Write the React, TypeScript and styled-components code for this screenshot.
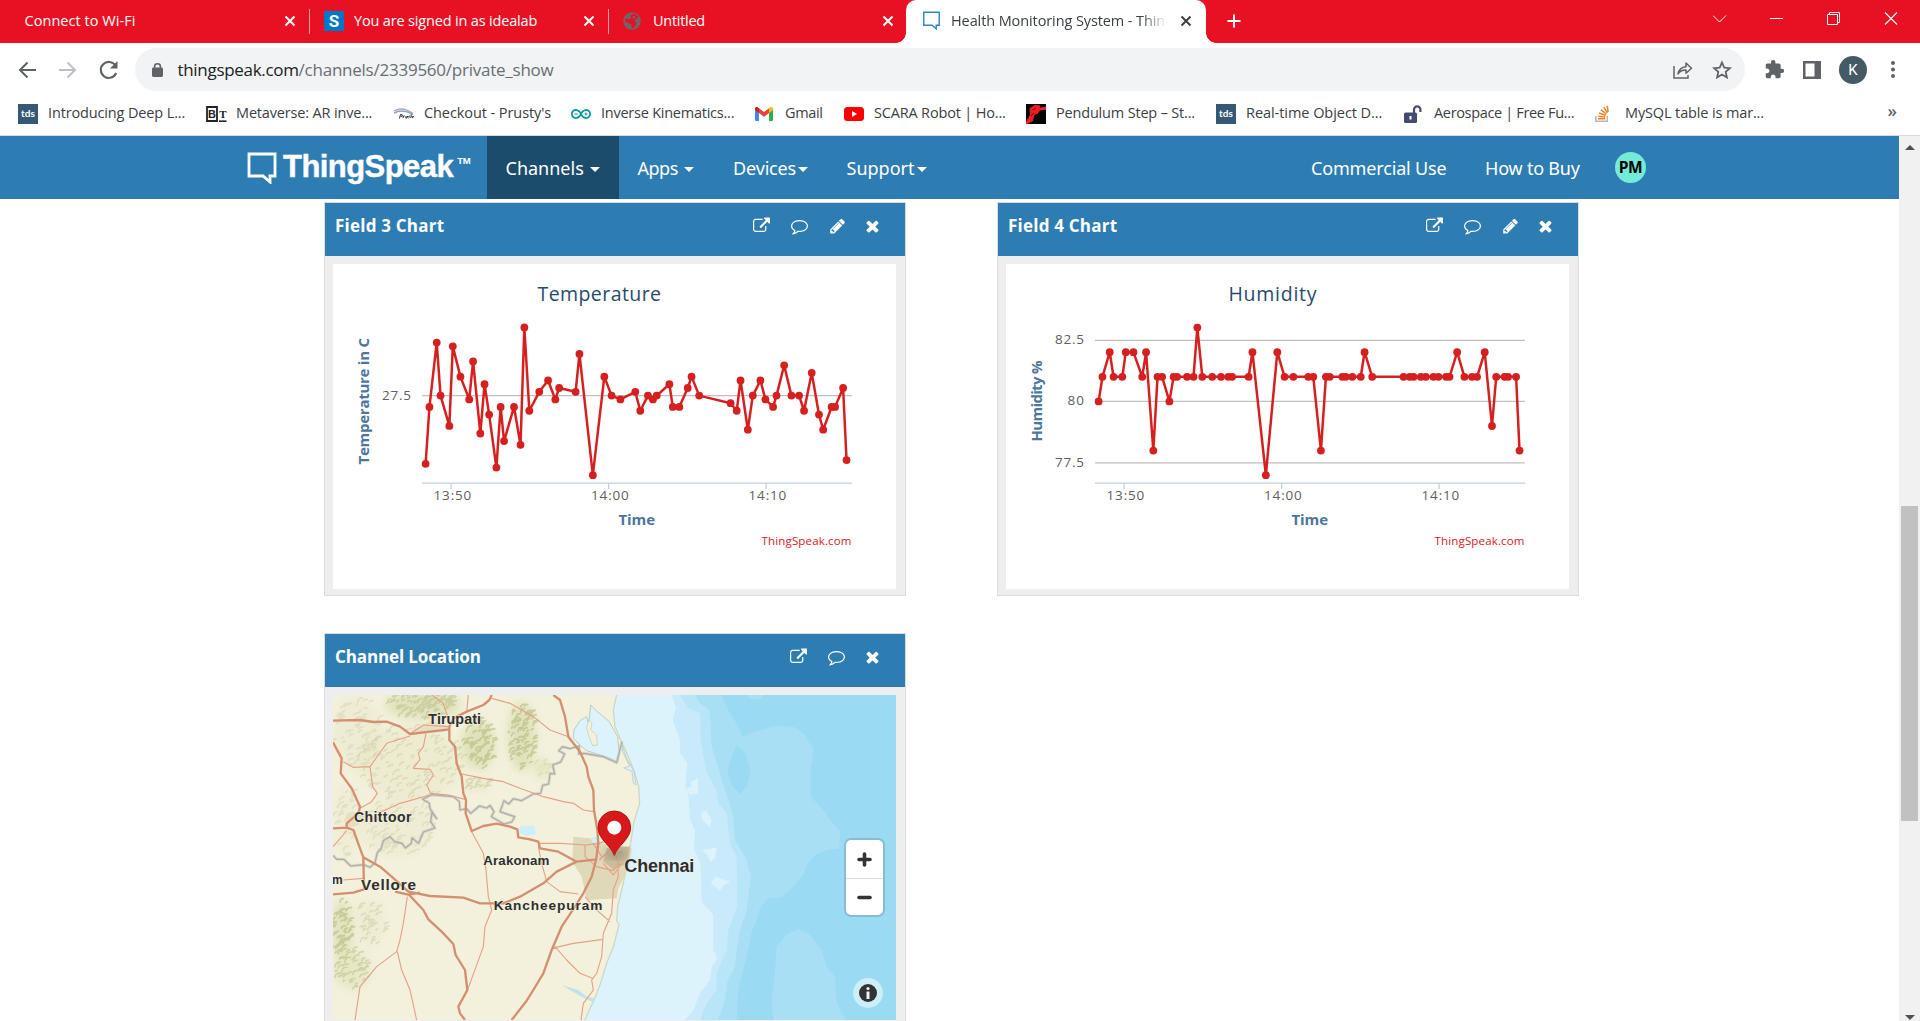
import React from 'react';
import styled, { createGlobalStyle, css } from 'styled-components';
import { SiArduino } from 'react-icons/si';

const UI_FONT = `'Open Sans', 'Noto Sans', sans-serif`;
const SITE_FONT = `'Noto Sans', 'Open Sans', sans-serif`;
const BLUE = '#2e7db2';
const RED = '#e81123';
const SERIES = '#d62020';

const GlobalStyle = createGlobalStyle`
  html, body { margin: 0; padding: 0; background: #fff; overflow: hidden; }
  * { box-sizing: border-box; }
  svg { display: block; flex: none; }
`;

const Window = styled.div`
  display: flex;
  flex-direction: column;
  width: 1920px;
  height: 1021px;
  overflow: hidden;
  background: #fff;
  font-family: ${UI_FONT};
`;

/* ---------- tab strip ---------- */

const TabStrip = styled.div`
  display: flex;
  height: 43px;
  background: ${RED};
  color: #fff;
`;

const Tab = styled.div<{ $width: number; $active?: boolean; $divider?: boolean; $pad?: number; $end?: number }>`
  position: relative;
  display: flex;
  align-items: center;
  width: ${(p) => p.$width}px;
  height: 43px;
  padding: 0 ${(p) => p.$end ?? 13}px 2px ${(p) => p.$pad ?? 14}px;
  ${(p) =>
    p.$divider &&
    css`
      &::after {
        content: '';
        position: absolute;
        right: 0;
        top: 9px;
        width: 1px;
        height: 25px;
        background: #f6a0a7;
      }
    `}
  ${(p) =>
    p.$active &&
    css`
      background: #fff;
      color: #3c4043;
      border-radius: 10px 10px 0 0;
      &::before,
      &::after {
        content: '';
        position: absolute;
        bottom: 0;
        width: 10px;
        height: 10px;
      }
      &::before {
        left: -10px;
        background: radial-gradient(circle at 0 0, transparent 9.5px, #fff 10px);
      }
      &::after {
        right: -10px;
        background: radial-gradient(circle at 100% 0, transparent 9.5px, #fff 10px);
      }
    `}
`;

const TabIcon = styled.span`
  display: flex;
  width: 30px;
  flex: none;
`;

const TabTitle = styled.span<{ $track?: number; $fade?: boolean }>`
  flex: 1;
  min-width: 0;
  overflow: hidden;
  white-space: nowrap;
  font-size: 14.5px;
  line-height: 22px;
  letter-spacing: ${(p) => p.$track ?? 0}px;
  ${(p) =>
    p.$fade &&
    css`
      margin-right: 12px;
      mask-image: linear-gradient(to right, #000 88%, transparent 100%);
    `}
`;

const SiteTile = styled.span`
  display: flex;
  align-items: center;
  justify-content: center;
  width: 20px;
  height: 20px;
  background: #0078c8;
  color: #fff;
  font: 700 17px/20px 'Roboto', sans-serif;
`;

const NewTab = styled.div`
  display: flex;
  align-items: center;
  padding: 0 0 1px 21px;
`;

const WindowButtons = styled.div`
  display: flex;
  margin-left: auto;
  padding: 11px 21px 0 0;
  gap: 42px;
`;

/* ---------- address row ---------- */

const AddressRow = styled.div`
  display: flex;
  align-items: center;
  height: 53px;
  flex: none;
  padding: 0 21px 0 18px;
  color: #5f6368;
`;

const NavButtons = styled.div`
  display: flex;
  align-items: center;
  gap: 21px;
  width: 117px;
`;

const AddressBar = styled.div`
  display: flex;
  align-items: center;
  width: 1610px;
  height: 43px;
  padding: 0 13px 0 17px;
  border-radius: 22px;
  background: #f1f3f4;
`;

const Url = styled.span`
  flex: 1;
  margin-left: 14.5px;
  font-size: 17px;
  line-height: 24px;
  letter-spacing: -0.24px;
  color: #6a6e73;
`;

const Host = styled.span`
  color: #202124;
  letter-spacing: -0.31px;
`;

const BarIcons = styled.div`
  display: flex;
  align-items: center;
  gap: 19px;
`;

const ToolIcons = styled.div`
  display: flex;
  align-items: center;
  margin-left: auto;
  gap: 18px;
`;

const ProfileDot = styled.span`
  display: flex;
  align-items: center;
  justify-content: center;
  width: 28px;
  height: 28px;
  border-radius: 50%;
  background: #455a64;
  color: #fff;
  font: 400 15px/28px 'Roboto', sans-serif;
`;

/* ---------- bookmarks ---------- */

const BookmarkBar = styled.div`
  display: flex;
  align-items: center;
  height: 40px;
  flex: none;
  padding: 0 23px 4px 18px;
  border-bottom: 1px solid #d8dadc;
  color: #3c4043;
`;

const Bookmark = styled.div<{ $width: number }>`
  display: flex;
  align-items: center;
  flex: none;
  width: ${(p) => p.$width}px;
`;

const BookmarkIcon = styled.span`
  display: flex;
  align-items: center;
  width: 30px;
  flex: none;
`;

const BookmarkLabel = styled.span<{ $track: number }>`
  padding-bottom: 2px;
  white-space: nowrap;
  font-size: 14.5px;
  line-height: 20px;
  letter-spacing: ${(p) => p.$track}px;
`;

const TdsTile = styled.span`
  width: 20px;
  height: 20px;
  background: #355876;
  color: #fff;
  text-align: center;
  font: 700 10px/19px 'Lato', sans-serif;
`;

const More = styled.span`
  margin-left: auto;
  padding-bottom: 5px;
  font-size: 17px;
  line-height: 20px;
  font-weight: 600;
  color: #5f6368;
`;

/* ---------- site ---------- */

const Viewport = styled.div`
  display: flex;
  flex: 1;
  min-height: 0;
`;

const Page = styled.div`
  display: flex;
  flex-direction: column;
  width: 1899px;
  overflow: hidden;
  font-family: ${SITE_FONT};
`;

const SiteNav = styled.nav`
  display: flex;
  height: 63px;
  flex: none;
  padding-left: 247px;
  background: ${BLUE};
  color: #fff;
`;

const Brand = styled.div`
  display: flex;
  width: 240px;
  padding-top: 16px;
`;

const BrandName = styled.span`
  margin: -2px 0 0 6px;
  font: 700 31px/34px 'Liberation Sans', sans-serif;
  letter-spacing: -0.55px;
  -webkit-text-stroke: 0.4px #fff;
`;

const Trademark = styled.span`
  margin: 3px 0 0 4px;
  font: 700 9.5px/12px 'Liberation Sans', sans-serif;
  letter-spacing: -0.3px;
`;

const NavItem = styled.div<{ $width: number; $pad: number; $active?: boolean; $track?: number; $gap?: number }>`
  display: flex;
  align-items: center;
  width: ${(p) => p.$width}px;
  padding: 0 0 0 ${(p) => p.$pad}px;
  gap: ${(p) => p.$gap ?? 0}px;
  background: ${(p) => (p.$active ? '#1c4c6b' : 'transparent')};
  font-size: 18px;
  line-height: 24px;
  letter-spacing: ${(p) => p.$track ?? 0}px;
  white-space: nowrap;
`;

const Caret = styled.i`
  width: 0;
  height: 0;
  margin-top: 3px;
  border: 5px solid transparent;
  border-top-color: #fff;
  border-bottom-width: 0;
`;

const NavRight = styled.div`
  display: flex;
  margin-left: auto;
  padding-right: 253px;
`;

const UserBadge = styled.span`
  align-self: center;
  width: 31px;
  height: 31px;
  border-radius: 50%;
  background: #74ebd9;
  color: #000;
  text-align: center;
  font: 700 15.5px/31px ${UI_FONT};
  letter-spacing: -0.3px;
`;

const Panels = styled.main`
  display: grid;
  grid-template-columns: 582px 582px;
  column-gap: 91px;
  row-gap: 37px;
  padding: 3px 0 0 324px;
`;

const Panel = styled.section`
  height: 394px;
  border: 1px solid #dcdcdc;
  background: #eee;
`;

const PanelHeader = styled.header`
  display: flex;
  justify-content: space-between;
  height: 53px;
  padding: 13px 26px 0 10px;
  background: ${BLUE};
  color: #fff;
`;

const PanelTitle = styled.h2<{ $track: number }>`
  margin: -2px 0 0;
  font: 700 17px/24px ${UI_FONT};
  letter-spacing: ${(p) => p.$track}px;
`;

const PanelActions = styled.div`
  display: flex;
  gap: 21px;
  padding-top: 1px;
`;

const PanelBody = styled.div`
  position: relative;
  height: 325px;
  margin: 8px 9px 6px 8px;
  background: #fff;
`;

/* ---------- map overlays ---------- */

const MapControls = styled.div`
  position: absolute;
  right: 13px;
  bottom: 12px;
  display: flex;
  flex-direction: column;
  align-items: flex-end;
  gap: 63px;
`;

const ZoomGroup = styled.div`
  display: flex;
  flex-direction: column;
  width: 37px;
  height: 75px;
  border-radius: 5px;
  background: #fff;
  box-shadow: 0 0 0 2px rgba(0, 0, 0, 0.13);
`;

const ZoomButton = styled.span`
  display: flex;
  align-items: center;
  justify-content: center;
  height: 38px;
  & + & {
    height: 37px;
    border-top: 1px solid #ddd;
  }
`;

const InfoButton = styled.span`
  display: flex;
  align-items: center;
  justify-content: center;
  width: 30px;
  height: 30px;
  border-radius: 50%;
  background: rgba(255, 255, 255, 0.5);
`;

/* ---------- scrollbar ---------- */

const Scrollbar = styled.div`
  display: flex;
  flex-direction: column;
  align-items: center;
  justify-content: space-between;
  width: 21px;
  padding: 9px 0 1px;
  background: #f1f1f1;
`;

const ScrollTrack = styled.div`
  flex: 1;
  width: 17px;
  padding-top: 356px;
`;

const Thumb = styled.div`
  height: 315px;
  background: #c1c1c1;
`;

const ScrollArrow = styled.i<{ $up?: boolean }>`
  border: 5px solid transparent;
  ${(p) =>
    p.$up
      ? 'border-top-width: 0; border-bottom-color: #505050;'
      : 'border-bottom-width: 0; border-top-color: #505050;'}
`;

/* ---------- icons ---------- */

const FA = {
  external:
    'M1408 928v320q0 119-84.5 203.5t-203.5 84.5h-832q-119 0-203.5-84.5t-84.5-203.5v-832q0-119 84.5-203.5t203.5-84.5h704q14 0 23 9t9 23v64q0 14-9 23t-23 9h-704q-66 0-113 47t-47 113v832q0 66 47 113t113 47h832q66 0 113-47t47-113v-320q0-14 9-23t23-9h64q14 0 23 9t9 23zm384-864v512q0 26-19 45t-45 19-45-19l-176-176-652 652q-10 10-23 10t-23-10l-114-114q-10-10-10-23t10-23l652-652-176-176q-19-19-19-45t19-45 45-19h512q26 0 45 19t19 45z',
  comment:
    'M896 384q-204 0-381.5 69.5t-282 187.5-104.5 255q0 112 71.5 213.5t201.5 175.5l87 50-27 96q-24 91-70 172 152-63 275-171l43-38 57 6q69 8 130 8 204 0 381.5-69.5t282-187.5 104.5-255-104.5-255-282-187.5-381.5-69.5zm896 512q0 174-120 321.5t-326 233-450 85.5q-70 0-145-8-198 175-460 242-49 14-114 22h-5q-15 0-27-10.5t-16-27.5v-1q-3-4-.5-12t2-10 4.5-9.5l6-9 7-8.5 8-9q7-8 31-34.5t34.5-38 31-39.5 32.5-51 27-59 26-76q-157-89-247.5-220t-90.5-281q0-174 120-321.5t326-233 450-85.5 450 85.5 326 233 120 321.5z',
  pencil:
    'M491 1536l91-91-235-235-91 91v107h128v128h107zm523-928q0-22-22-22-10 0-17 7l-542 542q-7 7-7 17 0 22 22 22 10 0 17-7l542-542q7-7 7-17zm-54-192l416 416-832 832h-416v-416zm683 96q0 53-37 90l-166 166-416-416 166-165q36-38 90-38 53 0 91 38l235 234q37 39 37 91z',
  times:
    'M1490 1322q0 40-28 68l-136 136q-28 28-68 28t-68-28l-294-294-294 294q-28 28-68 28t-68-28l-136-136q-28-28-28-68t28-68l294-294-294-294q-28-28-28-68t28-68l136-136q28-28 68-28t68 28l294 294 294-294q28-28 68-28t68 28l136 136q28 28 28 68t-28 68l-294 294 294 294q28 28 28 68z',
};

type FaName = keyof typeof FA;

const FaIcon = ({ name }: { name: FaName }) => {
  const boxes: Record<FaName, [string, number]> = {
    external: ['0 0 1792 1792', 17],
    comment: ['0 0 1792 1792', 17],
    pencil: ['0 0 1664 1792', 16],
    times: ['256 0 1280 1792', 13],
  };
  const [box, width] = boxes[name];
  return (
    <svg width={width} height={18} viewBox={box} fill="#fff">
      <path d={FA[name]} />
    </svg>
  );
};

const CloseX = () => (
  <svg width="14" height="14" viewBox="0 0 14 14" fill="none" stroke="currentColor" strokeWidth="2">
    <path d="M2.5 2.5l9 9M11.5 2.5l-9 9" />
  </svg>
);

const SpeechBubble = ({ w, h, color, stroke }: { w: number; h: number; color: string; stroke: number }) => (
  <svg width={w} height={h} viewBox="0 0 30 32" fill="none" stroke={color} strokeWidth={stroke}>
    <path d="M2 2h26v22h-5v6l-7-6H2z" />
  </svg>
);

const Globe = () => (
  <svg width="18" height="18" viewBox="0 0 18 18">
    <circle cx="9" cy="9" r="8.8" fill="#6f6469" />
    <path d="M9.5 1.8c3 .2 5 1.6 6 4l-2.500 1-1.600 2.200 2 1.600-1.200 4-2.600 1.800c-1.600-.6-1-2.600-1-4L5.400 11 2 9.500c0-1 .2-2 .8-3.200l3.200 1 2.400-1.200L7 4.300z" fill={RED} />
    <path d="M10.500 3.600l2.600 1.600-2.600 1.600-1.300-1.400z" fill="#6f6469" />
  </svg>
);

/* ---------- bookmark icons ---------- */

const BtIcon = () => (
  <svg width="21" height="18" viewBox="0 0 21 18">
    <path d="M1 2h10v14H1z" fill="#fff" stroke="#222" strokeWidth="1.8" />
    <text x="6" y="13" textAnchor="middle" fontSize="11" fontWeight="700" fontFamily="Liberation Sans" fill="#222">B</text>
    <text x="16.800" y="13" textAnchor="middle" fontSize="11" fontWeight="700" fontFamily="Liberation Serif" fill="#222">T</text>
    <path d="M13 16.200h7.500" stroke="#222" strokeWidth="1.600" />
  </svg>
);

const PrustyIcon = () => (
  <svg width="20" height="12" viewBox="0 0 20 12">
    <path d="M0 3C5 0 12 .5 19 5.500" fill="none" stroke="#b9a3a8" strokeWidth="1.500" />
    <path d="M0 5C6 2 13 3 19 6.500" fill="none" stroke="#7fa5cf" strokeWidth="1.500" />
    <path d="M5.500 10.500l1-4 1.600.2.200 1.500-1.500.3M9 10l.5-2 1.200-.2M12 8l-.2 2h1.200l.6-2M15.800 8l-1.200.5.8.8-1 .8M17.300 6.500L16.800 10M18 8l.6 1.800L19.600 8" fill="none" stroke="#2b2b33" strokeWidth="1" />
  </svg>
);

const GmailIcon = () => (
  <svg width="18" height="14" viewBox="0 0 18 14">
    <path d="M0 2v10.800C0 13.500.5 14 1.200 14H4V5.500z" fill="#4285f4" />
    <path d="M18 2v10.800c0 .7-.5 1.200-1.200 1.200H14V5.500z" fill="#34a853" />
    <path d="M14 1.200V6l4-3V1.800C18 .2 16.200-.5 15 .5z" fill="#fbbc04" />
    <path d="M4 6V1.200l5 3.800 5-3.800V6L9 9.800z" fill="#ea4335" />
    <path d="M0 1.800V3l4 3V1.200L3 .5C1.800-.5 0 .2 0 1.800z" fill="#c5221f" />
  </svg>
);

const YoutubeIcon = () => (
  <svg width="20" height="14" viewBox="0 0 20 14">
    <rect width="20" height="14" rx="3.500" fill="#f00" />
    <path d="M8 4v6l5-3z" fill="#fff" />
  </svg>
);

const RobotIcon = () => (
  <svg width="20" height="20" viewBox="0 0 20 20">
    <path d="M0 0h20v20H0z" fill="#050505" />
    <path d="M3.500 4.500L9 .8l5 .7v2.300l6-1.300v3.300l-6 .7-2.500 3.500-3 .8L7 17l-5.500 3H0v-2.500L4 11z" fill="#ee1c25" />
    <path d="M7 6l3-2M5 12l3-3" stroke="#700" strokeWidth="1" />
  </svg>
);

const OpenLockIcon = () => (
  <svg width="18" height="18" viewBox="0 0 18 18">
    <path d="M10 8V4.500a3.200 3.200 0 0 1 6.400 0V7" fill="none" stroke="#474a70" strokeWidth="2.200" />
    <rect y="7.500" width="13" height="10.500" rx="1.500" fill="#474a70" />
    <path d="M6.500 11v3.500" stroke="#fff" strokeWidth="2" />
  </svg>
);

const StackIcon = () => (
  <svg width="15" height="17" viewBox="0 0 15 17" fill="none">
    <path d="M.8 11v5.200h11.500V11" stroke="#b5b8bb" strokeWidth="1.500" />
    <path d="M3 13.800h7.200M3.200 11.200l7 .8M4 8l6.700 2.200M6 4.800l5.300 4.200M8.800 2.200l3.500 5.600M12.200.8l1 6" stroke="#f48024" strokeWidth="1.500" />
  </svg>
);

const tds = <TdsTile>tds</TdsTile>;

const BOOKMARKS: { label: string; width: number; track: number; icon: React.ReactNode }[] = [
  { label: 'Introducing Deep L...', width: 188, track: -0.14, icon: tds },
  { label: 'Metaverse: AR inve...', width: 188, track: -0.16, icon: <BtIcon /> },
  { label: "Checkout - Prusty's", width: 177, track: -0.08, icon: <PrustyIcon /> },
  { label: 'Inverse Kinematics...', width: 184, track: -0.24, icon: <SiArduino size={20} color="#00979d" /> },
  { label: 'Gmail', width: 89, track: -0.35, icon: <GmailIcon /> },
  { label: 'SCARA Robot | Ho...', width: 182, track: -0.17, icon: <YoutubeIcon /> },
  { label: 'Pendulum Step – St...', width: 190, track: -0.18, icon: <RobotIcon /> },
  { label: 'Real-time Object D...', width: 188, track: -0.05, icon: tds },
  { label: 'Aerospace | Free Fu...', width: 191, track: -0.34, icon: <OpenLockIcon /> },
  { label: 'MySQL table is mar...', width: 170, track: -0.13, icon: <StackIcon /> },
];

/* ---------- charts ---------- */

// [time position, temperature in 0.1 °C steps from 27.5, humidity %]
const SAMPLES: [number, number, number][] = [
  [276, -18, 80], [286, -3, 81], [305, 14, 82], [315, 0, 81], [338, -8, 81], [347, 13, 82], [367, 5, 82],
  [390, -1, 81], [400, 9, 82], [419, -10, 78], [430, 3, 81], [442, -5, 81], [461, -19, 80], [472, -3, 81],
  [481, -12, 81], [507, -3, 81], [524, -13, 81], [534, 18, 83], [547, -4, 81], [573, 1, 81], [596, 4, 81],
  [615, -1, 81], [625, 2, 81], [668, 1, 81], [678, 11, 82], [713, -21, 77], [743, 5, 82], [762, 0, 81],
  [785, -1, 81], [824, 1, 81], [837, -4, 81], [857, 0, 78], [870, -1, 81], [880, 0, 81], [913, 3, 81],
  [922, -3, 81], [939, -3, 81], [961, 2, 81], [971, 5, 82], [991, 0, 81], [1073, -2, 81], [1089, -4, 81],
  [1099, 4, 81], [1118, -9, 81], [1131, 0, 81], [1151, 4, 81], [1164, -1, 81], [1184, -3, 81], [1193, 0, 81],
  [1213, 8, 82], [1232, 0, 81], [1252, 0, 81], [1265, -4, 81], [1285, 6, 82], [1304, -5, 79], [1315, -9, 81],
  [1337, -3, 81], [1346, -3, 81], [1367, 2, 81], [1376, -17, 78],
];

type Point = [number, number];
const timeX = (t: number) => 320 + t / 2.6133;
const temperature: Point[] = SAMPLES.map(([t, v]) => [timeX(t), 395.6 - v * 3.79]);
const humidity: Point[] = SAMPLES.map(([t, , h]) => [timeX(t), 401.4 - (h - 80) * 24.6]);

const ChartSvg = styled.svg`
  width: 563px;
  height: 325px;
  font-family: ${UI_FONT};
`;
const ChartTitle = styled.text`
  font-size: 19.5px;
  fill: #274b6d;
`;
const TickLabel = styled.text`
  font-size: 13.5px;
  fill: #606060;
`;
const AxisTitle = styled.text`
  font-size: 15px;
  font-weight: 700;
  fill: #4d759e;
`;
const Credit = styled.text`
  font-size: 11.5px;
  fill: ${SERIES};
`;

interface ChartProps {
  title: string;
  titleX: number;
  titleWidth: number;
  axis: string;
  axisStart: number;
  axisWidth: number;
  grid: { label: string; y: number; w: number }[];
  points: Point[];
}

const Chart = ({ title, titleX, titleWidth, axis, axisStart, axisWidth, grid, points }: ChartProps) => (
  <ChartSvg viewBox="333 264 563 325">
    <ChartTitle x={titleX} y="300.500" textLength={titleWidth}>{title}</ChartTitle>
    <AxisTitle transform={`translate(368.800 ${axisStart}) rotate(-90)`} textLength={axisWidth}>{axis}</AxisTitle>
    {grid.map((g) => (
      <g key={g.label}>
        <path d={`M422 ${g.y}H852`} stroke="#c0c0c0" strokeWidth="1.250" />
        <TickLabel x={411 - g.w} y={g.y + 4} textLength={g.w}>{g.label}</TickLabel>
      </g>
    ))}
    <path d="M422 483H852M451.100 483v6M608.600 483v6M766.100 483v6" stroke="#c0d0e0" strokeWidth="1.250" fill="none" />
    {['13:50', '14:00', '14:10'].map((label, i) => (
      <TickLabel key={label} x={433.6 + i * 157.5} y="499.700" textLength="37.600">{label}</TickLabel>
    ))}
    <AxisTitle x="618.500" y="525" textLength="36.500">Time</AxisTitle>
    <Credit x="761.500" y="545" textLength="90">ThingSpeak.com</Credit>
    <polyline points={points.map((p) => p.join(',')).join(' ')} fill="none" stroke={SERIES} strokeWidth="2.500" strokeLinejoin="round" />
    {points.map(([x, y]) => (
      <circle key={x} cx={x} cy={y} r="3.900" fill={SERIES} />
    ))}
  </ChartSvg>
);

/* ---------- map ---------- */

function makeRandom(seed: number) {
  let s = seed;
  return () => {
    s = (s * 16807) % 2147483647;
    return s / 2147483647;
  };
}

// Hill shading: short slanted ridges scattered in an ellipse.
function ridges(cx: number, cy: number, rx: number, ry: number, count: number, seed: number) {
  const rnd = makeRandom(seed);
  let d = '';
  for (let i = 0; i < count; i++) {
    const a = rnd() * Math.PI * 2;
    const r = Math.sqrt(rnd());
    const x = cx + Math.cos(a) * r * rx;
    const y = cy + Math.sin(a) * r * ry;
    const l = 4 + rnd() * 13;
    const slope = 0.3 + rnd() * 0.9;
    d += `M${x.toFixed(0)} ${y.toFixed(0)}q${(l * 0.2).toFixed(0)} ${(-l * slope).toFixed(0)} ${l.toFixed(0)} ${(-l * slope * 0.9).toFixed(0)}`;
  }
  return d;
}

const HILLS: { c: [number, number, number, number]; n: number; color: string; base: number; ink: number }[] = [
  { c: [310, 225, 115, 45], n: 110, color: '#b5bd84', base: 0.9, ink: 0.5 },
  { c: [475, 345, 50, 75], n: 65, color: '#adb67a', base: 0.95, ink: 0.55 },
  { c: [605, 320, 42, 105], n: 80, color: '#adb67a', base: 0.95, ink: 0.55 },
  { c: [665, 415, 25, 28], n: 8, color: '#c3ca98', base: 0.8, ink: 0.35 },
  { c: [270, 400, 160, 110], n: 120, color: '#cfcba6', base: 0.3, ink: 0.5 },
  { c: [110, 310, 75, 110], n: 70, color: '#d6d2b0', base: 0.25, ink: 0.5 },
  { c: [230, 590, 110, 90], n: 80, color: '#d6d2b0', base: 0.25, ink: 0.5 },
  { c: [80, 570, 45, 110], n: 40, color: '#d6d2b0', base: 0.2, ink: 0.5 },
  { c: [65, 900, 34, 90], n: 65, color: '#adb67a', base: 0.85, ink: 0.55 },
  { c: [95, 1020, 55, 60], n: 45, color: '#b5bd84', base: 0.6, ink: 0.5 },
  { c: [150, 880, 45, 75], n: 30, color: '#cbcaa0', base: 0.25, ink: 0.5 },
  { c: [470, 465, 40, 18], n: 14, color: '#bac18b', base: 0.5, ink: 0.45 },
];

const MAJOR_ROADS =
  'M39 272L120 270 160 276 200 275 240 290 270 312 330 305 388 298M515 195L508 210 490 225 440 245 400 265 388 290 388 330 405 350 410 400 425 440 430 490 438 510 437 550 455 603L490 588 530 581 570 590 592 598 595 622 630 628 655 635 660 655 715 665 770 695M700 195L720 210 735 260 745 320 780 365 800 410 805 440 820 480 822 540 832 600 835 640 828 690M39 337L65 385 62 430 95 475 120 530 115 550 80 580 80 593 100 600 118 650 130 682 180 710 215 740 265 785 330 798 430 803 480 820 550 820 600 800 670 760 710 725 770 695 830 688M39 793L100 788 132 778 130 682M225 785L265 794 300 788M265 792L310 840 325 868 365 905 400 942 407 975 435 1020 442 1080 415 1130 420 1150 435 1170M828 690L815 740 790 790 765 830 725 890 695 960 670 1030 640 1080 620 1112 575 1170M39 595L80 593';

const MINOR_ROADS =
  'M335 195L370 220 385 265M445 195L440 245M515 205L570 220 640 260 690 300 745 320M270 318L200 340 175 375 150 410 100 412 70 395M150 410L158 470 172 490 155 515 120 535M318 310L310 350 295 370 300 388 280 415 330 418 340 435 320 465 332 490 385 495 435 508M425 432L490 445 550 455 600 475 670 500 730 515 760 520 790 540 820 545M455 605L490 670 498 720 505 800 515 840 495 890 490 950 450 1060 440 1085M175 550L240 520 330 495M660 640L720 640 800 645 835 640M655 650L665 700 680 755 720 785 775 792M262 800L250 880 240 930 230 965 170 1010 120 1070 105 1170M232 965L245 1020 270 1080 290 1170M875 650L893 690 895 740 880 780 875 850 850 910 845 980 830 1030 815 1050 820 1080 790 1120 783 1170M695 955L760 940 800 935 848 928M705 950L740 990 780 1030 818 1045M795 800L830 840 870 875M39 650L80 603M70 750L130 745M270 312L310 285 385 290M680 750L710 725M795 645L795 680 830 710 880 722 900 700M835 640L870 630 900 650M838 690L870 660 905 668M850 700L880 735 905 700M820 640L845 680';

const BORDER =
  'M39 676L50 688 72 688 92 708 130 704 150 712 165 698 172 668 184 655 190 632 210 620 224 635 246 640 256 654 274 640 276 624 296 640 310 606 345 594 332 575 336 548 350 566 330 536 328 520 308 508 335 494 400 500 418 515 420 540 440 536 452 550 478 528 500 534 510 526 522 545 514 560 552 582 575 576 584 560 540 545 552 512 566 522 580 506 604 512 640 492 662 490 668 466 686 462 690 430 704 432 698 405 722 396 734 372 716 362 728 350 750 356 778 348 776 372 792 370 850 380 890 398 906 335';

const LAND =
  'M20 180H893L880 240 885 290 905 335 925 380 943 425 956 470 959 520 942 575 935 620 928 665 918 720 905 780 893 830 890 872 897 885 880 950 860 1000 845 1050 830 1092 808 1140 786 1190H20z';

const LABELS: { text: string; x: number; y: number; w: number; size: number }[] = [
  { text: 'Tirupati', x: 325, y: 282, w: 158, size: 43 },
  { text: 'Chittoor', x: 102, y: 577, w: 172, size: 42 },
  { text: 'Vellore', x: 123, y: 779, w: 165, size: 46 },
  { text: 'Arakonam', x: 490, y: 704, w: 198, size: 40 },
  { text: 'Kancheepuram', x: 521, y: 839, w: 326, size: 41 },
  { text: 'Chennai', x: 913, y: 726, w: 210, size: 54 },
  { text: 'm', x: 36, y: 762, w: 29, size: 36 },
];

const MapLabel = styled.text`
  font-family: 'Liberation Sans', sans-serif;
  font-weight: 700;
  fill: #2f2f2f;
  stroke: #f5f3e2;
  stroke-width: 5px;
  stroke-opacity: 0.6;
  paint-order: stroke;
`;

const LocationMap = () => (
  <svg width="563" height="325" viewBox="39 195 1689 975">
    <defs>
      <filter id="soft" x="-30%" y="-30%" width="160%" height="160%">
        <feGaussianBlur stdDeviation="14" />
      </filter>
      <filter id="relief" x="-10%" y="-10%" width="120%" height="120%">
        <feGaussianBlur stdDeviation="1.5" />
      </filter>
    </defs>
    <path d="M39 195H1728V1170H39z" fill="#9adaf3" />
    <path
      d="M39 195H1204L1225 240 1252 285 1268 320 1300 305 1330 300 1350 290 1380 287 1420 290 1455 313 1465 335 1480 355 1478 385 1472 410 1472 500 1515 545 1530 570 1560 602 1558 655 1520 660 1485 675 1460 705 1450 735 1425 765 1385 802 1345 805 1320 835 1310 870 1295 905 1285 960 1270 1020 1255 1080 1250 1170H39z"
      fill="#a9dff5"
    />
    <path d="M39 195H1125L1140 220 1168 240 1175 350 1200 430 1208 460 1222 500 1240 560 1245 630 1280 690 1292 740 1280 840 1260 900 1250 960 1245 1010 1220 1060 1215 1110 1195 1170H39z" fill="#b9e5f8" />
    <path d="M39 195H1080L1105 235 1140 250 1142 330 1160 430 1190 480 1195 520 1220 550 1230 640 1250 680 1252 830 1225 900 1220 960 1190 1030 1190 1080 1160 1120 1140 1170H39z" fill="#c8eafa" />
    <path d="M39 195H1055L1068 235 1058 270 1080 330 1080 370 1102 400 1095 470 1105 490 1110 570 1125 600 1122 660 1142 700 1145 815 1180 855 1180 960 1192 985 1175 1010 1170 1050 1140 1090 1120 1140 1095 1170H39z" fill="#dcf3fc" />
    <path d="M1250 345L1275 370 1292 420 1280 470 1258 492 1235 465 1223 425 1235 380z" fill="#9adaf3" />
    <path d="M1370 950L1400 912 1435 897 1470 915 1505 960 1520 1010 1545 1040 1550 1120 1578 1170H1360L1355 1110 1365 1030zM1280 195h52l-12 12h-30z" fill="#a9dff5" />
    <path d="M1112 455l22-10v45l-26 5-8-20 14-5zM1145 545l15-3 15 30-6 20-24-25zM1145 660l45-8-4 32-14 12-10-22zM1172 760l15-20 45 15-20 10-12 17z" fill="#dcf3fc" />

    <path d={LAND} fill="#f3f1dc" stroke="#cfd8c4" strokeWidth="4" />
    {HILLS.map(({ c, n, color, base, ink }, i) => (
      <g key={i}>
        <ellipse cx={c[0]} cy={c[1]} rx={c[2]} ry={c[3]} fill="#d9dcac" opacity={base * 0.75} filter="url(#soft)" />
        <path
          d={ridges(c[0], c[1], c[2], c[3], n, 71 + i * 97)}
          stroke={color}
          strokeWidth="5"
          strokeOpacity={ink}
          strokeLinecap="round"
          fill="none"
          filter="url(#relief)"
        />
      </g>
    ))}
    <path d="M760 620l50 5 30 15 60 5 35 10-10 60-30 60-5 30-90 5-15-70-28-45z" fill="#dfd8b9" filter="url(#relief)" />
    <path d="M860 655l70-6-8 50-42 20-30-25z" fill="#c9bd9c" filter="url(#relief)" />
    <path d="M275 300l60-28 50 18-10 15-90 8zM78 560l35-12 5 35-35 12z" fill="#e6dfc2" />
    <path d="M760 325L762 300 780 272 800 260 806 285 812 225 832 245 868 275 893 320 898 370 893 395 850 378 800 362 780 345z" fill="#dcf3fc" stroke="#b7cdc6" strokeWidth="3" />
    <path d="M806 270l10 10-4 20 18 15 2 30-14 2-12-30-6-25z" fill="#f3f1dc" stroke="#bcc9b4" strokeWidth="2" />
    <path d="M906 345l14 40 22 40 6 40-8-6-4-35-25-10 18-6-22-45z" fill="#dcf3fc" stroke="#a9c3bd" strokeWidth="2" />
    <path d="M598 590l45-5 5 28-30 4-22-8zM812 625l25-8v20l-18 2z" fill="#cfeefa" />
    <path d="M725 1065l50 15 25 20 25 5-5 12-30-14-25-14z" fill="#bfe3ee" />
    <path d={BORDER} fill="none" stroke="#c9c7be" strokeWidth="9" strokeOpacity="0.6" strokeLinejoin="round" />
    <path d={BORDER} fill="none" stroke="#adaca7" strokeWidth="3.500" strokeLinejoin="round" />
    <path d={MINOR_ROADS} fill="none" stroke="#e5a188" strokeWidth="3.400" strokeLinejoin="round" />
    <path d={MAJOR_ROADS} fill="none" stroke="#d38f70" strokeWidth="7" strokeLinejoin="round" />
    {LABELS.map((l) => (
      <MapLabel key={l.text} x={l.x} y={l.y} fontSize={l.size} textLength={l.w}>{l.text}</MapLabel>
    ))}
    <ellipse cx="888" cy="672" rx="34" ry="12" fill="#000" opacity="0.250" filter="url(#soft)" />
    <path d="M883 676C872 645 834 628 834 592a49 49 0 1 1 98 0c0 36-38 53-49 84z" fill="#d7191c" stroke="#b01417" strokeWidth="3" />
    <circle cx="883" cy="593" r="21" fill="#fff" />
  </svg>
);

/* ---------- panel ---------- */

interface CardProps {
  title: string;
  track: number;
  actions: FaName[];
  children: React.ReactNode;
}

const Card = ({ title, track, actions, children }: CardProps) => (
  <Panel>
    <PanelHeader>
      <PanelTitle $track={track}>{title}</PanelTitle>
      <PanelActions>
        {actions.map((a) => (
          <FaIcon key={a} name={a} />
        ))}
      </PanelActions>
    </PanelHeader>
    <PanelBody>{children}</PanelBody>
  </Panel>
);

export default function App() {
  return (
    <Window>
      <GlobalStyle />
      <TabStrip>
        <Tab $width={310} $pad={24.5} $divider>
          <TabTitle $track={0.05}>Connect to Wi-Fi</TabTitle>
          <CloseX />
        </Tab>
        <Tab $width={299} $divider>
          <TabIcon><SiteTile>S</SiteTile></TabIcon>
          <TabTitle $track={-0.17}>You are signed in as idealab</TabTitle>
          <CloseX />
        </Tab>
        <Tab $width={297} $end={11.5}>
          <TabIcon><Globe /></TabIcon>
          <TabTitle $track={-0.27}>Untitled</TabTitle>
          <CloseX />
        </Tab>
        <Tab $width={300} $pad={15} $active>
          <TabIcon><SpeechBubble w={21} h={19} color="#2e88c0" stroke={2.4} /></TabIcon>
          <TabTitle $track={-0.1} $fade>Health Monitoring System - Thin</TabTitle>
          <CloseX />
        </Tab>
        <NewTab>
          <svg width="14" height="14" viewBox="0 0 14 14" stroke="#fff" strokeWidth="2">
            <path d="M7 .5v13M.5 7h13" />
          </svg>
        </NewTab>
        <WindowButtons>
          <svg width="15" height="15" viewBox="0 0 15 15" fill="none" stroke="#fff" strokeWidth="1"><path d="M0 4.500l6.500 6.500L13 4.500" /></svg>
          <svg width="15" height="15" viewBox="0 0 15 15" stroke="#fff" strokeWidth="1"><path d="M0 7.500h13" /></svg>
          <svg width="15" height="15" viewBox="0 0 15 15" fill="none" stroke="#fff" strokeWidth="1"><path d="M.5 3.500h10v10h-10zM2.500 3.500v-2h10v10h-2" /></svg>
          <svg width="15" height="15" viewBox="0 0 15 15" stroke="#fff" strokeWidth="1.100"><path d="M1 1.500l12 12M13 1.500l-12 12" /></svg>
        </WindowButtons>
      </TabStrip>

      <AddressRow>
        <NavButtons>
          <svg width="19" height="20" viewBox="0 0 19 20" fill="none" stroke="#5f6368" strokeWidth="2"><path d="M18 10H2.500M9.500 2.500L2 10l7.500 7.500" /></svg>
          <svg width="19" height="20" viewBox="0 0 19 20" fill="none" stroke="#bdc1c6" strokeWidth="2"><path d="M1 10h15.500M9.500 2.500L17 10l-7.500 7.500" /></svg>
          <svg width="22" height="20" viewBox="0 0 22 20"><path d="M17.500 5.500A8 8 0 1 0 18.200 13" fill="none" stroke="#5f6368" strokeWidth="2.100" /><path d="M19.500 1v7.500H12z" fill="#5f6368" /></svg>
        </NavButtons>
        <AddressBar>
          <svg width="11" height="14" viewBox="0 0 11 14"><rect y="4.500" width="11" height="9.500" rx="1.400" fill="#5f6368" /><path d="M2.600 5V3.400a2.900 2.600 0 0 1 5.800 0V5" fill="none" stroke="#5f6368" strokeWidth="1.600" /></svg>
          <Url><Host>thingspeak.com</Host>/channels/2339560/private_show</Url>
          <BarIcons>
            <svg width="20" height="18" viewBox="0 0 20 18" fill="none" stroke="#5f6368" strokeWidth="1.500"><path d="M1 5v12h14v-3" /><path d="M5 13c.8-4.500 3.500-7 8-7.300V2l5.500 5.300-5.500 5V9c-3.500-.2-6 1-8 4z" strokeLinejoin="round" /></svg>
            <svg width="20" height="19" viewBox="0 0 20 19" fill="none" stroke="#5f6368" strokeWidth="1.800"><path d="M10 2.500l2.300 5.200 5.600.5-4.200 3.700 1.200 5.500L10 14.500l-4.900 2.900 1.200-5.500L2.100 8.200l5.600-.5z" /></svg>
          </BarIcons>
        </AddressBar>
        <ToolIcons>
          <svg width="21" height="21" viewBox="0 0 24 24" fill="#5f6368"><path d="M20.500 11H19V7c0-1.100-.9-2-2-2h-4V3.500a2.500 2.500 0 0 0-5 0V5H4c-1.100 0-1.990.9-1.990 2v3.800H3.500c1.490 0 2.700 1.210 2.700 2.700s-1.210 2.700-2.700 2.700H2V20c0 1.100.9 2 2 2h3.800v-1.500c0-1.490 1.210-2.700 2.700-2.700 1.490 0 2.700 1.210 2.700 2.700V22H17c1.100 0 2-.9 2-2v-4h1.500a2.500 2.500 0 0 0 0-5z" /></svg>
          <svg width="18" height="18" viewBox="0 0 18 18" fill="#5f6368"><path fillRule="evenodd" d="M0 0h18v18H0zM2.500 2.500v13h9v-13z" /></svg>
          <ProfileDot>K</ProfileDot>
          <svg width="14" height="20" viewBox="0 0 14 20" fill="#5f6368"><circle cx="8" cy="3" r="2" /><circle cx="8" cy="9.500" r="2" /><circle cx="8" cy="16" r="2" /></svg>
        </ToolIcons>
      </AddressRow>

      <BookmarkBar>
        {BOOKMARKS.map((b) => (
          <Bookmark key={b.label} $width={b.width}>
            <BookmarkIcon>{b.icon}</BookmarkIcon>
            <BookmarkLabel $track={b.track}>{b.label}</BookmarkLabel>
          </Bookmark>
        ))}
        <More>»</More>
      </BookmarkBar>

      <Viewport>
        <Page>
          <SiteNav>
            <Brand>
              <SpeechBubble w={30} h={32} color="#fff" stroke={2.8} />
              <BrandName>ThingSpeak</BrandName>
              <Trademark>TM</Trademark>
            </Brand>
            <NavItem $width={132} $pad={18.5} $gap={6.5} $active>Channels<Caret /></NavItem>
            <NavItem $width={96} $pad={18.5} $gap={6.5} $track={-0.5}>Apps<Caret /></NavItem>
            <NavItem $width={113} $pad={18} $gap={2} $track={-0.15}>Devices<Caret /></NavItem>
            <NavItem $width={113} $pad={18.5} $gap={2.5}>Support<Caret /></NavItem>
            <NavRight>
              <NavItem $width={174} $pad={0} $track={-0.16}>Commercial Use</NavItem>
              <NavItem $width={130} $pad={0} $track={-0.2}>How to Buy</NavItem>
              <UserBadge>PM</UserBadge>
            </NavRight>
          </SiteNav>
          <Panels>
            <Card title="Field 3 Chart" track={0.22} actions={['external', 'comment', 'pencil', 'times']}>
              <Chart
                title="Temperature"
                titleX={537.5}
                titleWidth={123.5}
                axis="Temperature in C"
                axisStart={464.5}
                axisWidth={126.5}
                grid={[{ label: '27.5', y: 395.6, w: 29 }]}
                points={temperature}
              />
            </Card>
            <Card title="Field 4 Chart" track={0.22} actions={['external', 'comment', 'pencil', 'times']}>
              <Chart
                title="Humidity"
                titleX={555.5}
                titleWidth={88}
                axis="Humidity %"
                axisStart={441.5}
                axisWidth={81}
                grid={[
                  { label: '82.5', y: 340.4, w: 29 },
                  { label: '80', y: 401.4, w: 16.5 },
                  { label: '77.5', y: 462.8, w: 29 },
                ]}
                points={humidity}
              />
            </Card>
            <Card title="Channel Location" track={-0.12} actions={['external', 'comment', 'times']}>
              <LocationMap />
              <MapControls>
                <ZoomGroup>
                  <ZoomButton>
                    <svg width="15" height="15" viewBox="0 0 15 15" stroke="#333" strokeWidth="3.600" strokeLinecap="round"><path d="M7.500 2v11M2 7.500h11" /></svg>
                  </ZoomButton>
                  <ZoomButton>
                    <svg width="15" height="15" viewBox="0 0 15 15" stroke="#333" strokeWidth="3.600" strokeLinecap="round"><path d="M2 7.500h11" /></svg>
                  </ZoomButton>
                </ZoomGroup>
                <InfoButton>
                  <svg width="18" height="18" viewBox="0 0 18 18"><circle cx="9" cy="9" r="9" fill="#333" /><circle cx="9" cy="4.500" r="1.600" fill="#e8f5fb" /><path d="M7.500 7.500h3V15h-3z" fill="#e8f5fb" /></svg>
                </InfoButton>
              </MapControls>
            </Card>
          </Panels>
        </Page>
        <Scrollbar>
          <ScrollArrow $up />
          <ScrollTrack><Thumb /></ScrollTrack>
          <ScrollArrow />
        </Scrollbar>
      </Viewport>
    </Window>
  );
}
